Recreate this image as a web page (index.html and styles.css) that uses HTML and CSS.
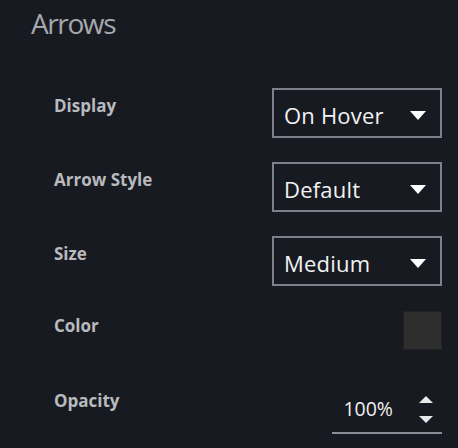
FILE: index.html
```html
<!DOCTYPE html>
<html>
<head>
<meta charset="utf-8">
<link rel="stylesheet" href="styles.css">
</head>
<body>
<div class="panel">
  <h1 class="title">Arrows</h1>
  <div class="rows">
    <div class="row">
      <div class="label">Display</div>
      <div class="select"><span class="value">On Hover</span><svg class="caret" width="16" height="9" viewBox="0 0 16 9"><polygon points="0,0 16,0 8,9" fill="#ffffff"/></svg></div>
    </div>
    <div class="row">
      <div class="label">Arrow Style</div>
      <div class="select"><span class="value">Default</span><svg class="caret" width="16" height="9" viewBox="0 0 16 9"><polygon points="0,0 16,0 8,9" fill="#ffffff"/></svg></div>
    </div>
    <div class="row">
      <div class="label">Size</div>
      <div class="select"><span class="value">Medium</span><svg class="caret" width="16" height="9" viewBox="0 0 16 9"><polygon points="0,0 16,0 8,9" fill="#ffffff"/></svg></div>
    </div>
    <div class="row">
      <div class="label label-color">Color</div>
      <div class="swatch"></div>
    </div>
    <div class="row">
      <div class="label label-opacity">Opacity</div>
      <div class="number">
        <span class="num-value">100%</span>
        <div class="spinner">
          <svg width="14" height="7" viewBox="0 0 14 7"><polygon points="7,0 14,7 0,7" fill="#e8e8e8"/></svg>
          <svg width="14" height="7" viewBox="0 0 14 7"><polygon points="0,0 14,0 7,7" fill="#e8e8e8"/></svg>
        </div>
      </div>
    </div>
  </div>
</div>
</body>
</html>
```
FILE: styles.css
```css
html, body {
  margin: 0;
  padding: 0;
  background: #181a22;
  height: 100%;
}
body {
  font-family: "Open Sans", "Noto Sans", sans-serif;
}
.panel {
  padding: 6px 16px 0 31px;
}
.title {
  margin: 0;
  font-size: 28px;
  line-height: 34px;
  font-weight: 400;
  color: #a7a8ac;
  letter-spacing: -1.4px;
}
.rows {
  margin-top: 48px;
  padding-left: 23px;
  display: flex;
  flex-direction: column;
  gap: 24px;
}
.row {
  height: 50px;
  display: flex;
  justify-content: space-between;
  align-items: flex-start;
}
.label {
  margin-top: 8px;
  font-size: 17px;
  line-height: 20px;
  font-weight: 700;
  color: #b9babd;
  letter-spacing: 0;
}
.label-color {
  margin-top: 6px;
}
.label-opacity {
  margin-top: 7px;
}
.select {
  box-sizing: border-box;
  width: 170px;
  height: 50px;
  border: 2px solid #7e808c;
  display: flex;
  align-items: center;
  justify-content: space-between;
  padding: 4px 14px 0 10px;
}
.value {
  font-size: 22px;
  line-height: 30px;
  color: #f2f2f2;
  letter-spacing: 0.2px;
}
.caret {
  display: block;
}
.swatch {
  box-sizing: border-box;
  margin-top: 1px;
  width: 39px;
  height: 39px;
  background: #2e2e2e;
  border: 1px solid #222222;
}
.number {
  box-sizing: border-box;
  width: 110px;
  height: 50px;
  border-bottom: 2px solid #8a8c97;
  display: flex;
  align-items: flex-start;
  justify-content: flex-end;
  padding-right: 9px;
}
.num-value {
  margin-top: 12px;
  margin-right: 26px;
  font-size: 19.5px;
  line-height: 26px;
  color: #f0f0f0;
}
.spinner {
  margin-top: 12px;
  display: flex;
  flex-direction: column;
  gap: 13px;
}
.spinner svg {
  display: block;
}
```
